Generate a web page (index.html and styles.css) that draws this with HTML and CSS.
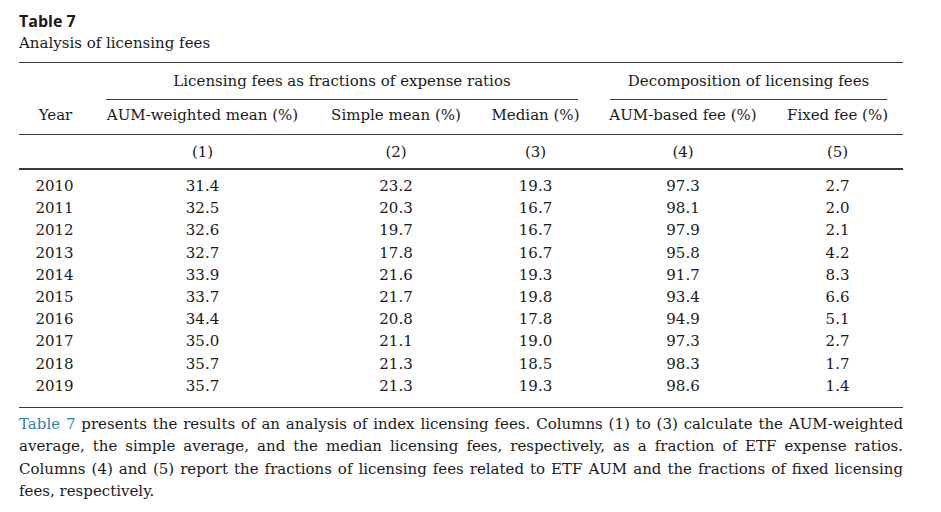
FILE: index.html
```html
<!DOCTYPE html>
<html lang="en">
<head>
<meta charset="utf-8">
<title>Table 7</title>
<link rel="stylesheet" href="styles.css">
</head>
<body>
<div class="page">
  <div class="label">Table 7</div>
  <div class="title">Analysis of licensing fees</div>
  <table class="tbl">
    <colgroup>
      <col class="c-year"><col class="c1"><col class="c2"><col class="c3"><col class="c4"><col class="c5">
    </colgroup>
    <thead>
      <tr class="r-group">
        <th></th>
        <th colspan="3"><div class="group">Licensing fees as fractions of expense ratios</div></th>
        <th colspan="2"><div class="group">Decomposition of licensing fees</div></th>
      </tr>
      <tr class="r-head">
        <th class="year">Year</th>
        <th>AUM-weighted mean (%)</th>
        <th>Simple mean (%)</th>
        <th>Median (%)</th>
        <th>AUM-based fee (%)</th>
        <th>Fixed fee (%)</th>
      </tr>
      <tr class="r-num">
        <th></th><th>(1)</th><th>(2)</th><th>(3)</th><th>(4)</th><th>(5)</th>
      </tr>
    </thead>
    <tbody>
      <tr><td>2010</td><td>31.4</td><td>23.2</td><td>19.3</td><td>97.3</td><td>2.7</td></tr>
      <tr><td>2011</td><td>32.5</td><td>20.3</td><td>16.7</td><td>98.1</td><td>2.0</td></tr>
      <tr><td>2012</td><td>32.6</td><td>19.7</td><td>16.7</td><td>97.9</td><td>2.1</td></tr>
      <tr><td>2013</td><td>32.7</td><td>17.8</td><td>16.7</td><td>95.8</td><td>4.2</td></tr>
      <tr><td>2014</td><td>33.9</td><td>21.6</td><td>19.3</td><td>91.7</td><td>8.3</td></tr>
      <tr><td>2015</td><td>33.7</td><td>21.7</td><td>19.8</td><td>93.4</td><td>6.6</td></tr>
      <tr><td>2016</td><td>34.4</td><td>20.8</td><td>17.8</td><td>94.9</td><td>5.1</td></tr>
      <tr><td>2017</td><td>35.0</td><td>21.1</td><td>19.0</td><td>97.3</td><td>2.7</td></tr>
      <tr><td>2018</td><td>35.7</td><td>21.3</td><td>18.5</td><td>98.3</td><td>1.7</td></tr>
      <tr><td>2019</td><td>35.7</td><td>21.3</td><td>19.3</td><td>98.6</td><td>1.4</td></tr>
    </tbody>
  </table>
  <p class="note">
    <span class="line"><a class="ref" href="#">Table 7</a> presents the results of an analysis of index licensing fees. Columns (1) to (3) calculate the AUM-weighted</span>
    <span class="line">average, the simple average, and the median licensing fees, respectively, as a fraction of ETF expense ratios.</span>
    <span class="line">Columns (4) and (5) report the fractions of licensing fees related to ETF AUM and the fractions of fixed licensing</span>
    <span class="line last">fees, respectively.</span>
  </p>
</div>
</body>
</html>
```
FILE: styles.css
```css
html, body {
  margin: 0;
  padding: 0;
  background: #fff;
}
.page {
  width: 884px;
  padding: 10px 0 0 19px;
  color: #1a1a1a;
  font-family: "DejaVu Serif", "Liberation Serif", serif;
  font-size: 15px;
  line-height: 22px;
}
.label {
  font-family: "Open Sans", "DejaVu Sans", sans-serif;
  font-weight: 700;
  font-size: 16px;
  line-height: 22px;
}
.title {
  line-height: 23px;
}
.tbl {
  margin-top: 7px;
  width: 884px;
  border-collapse: collapse;
  table-layout: fixed;
  border-top: 1.5px solid #3a3a3a;
  border-bottom: 1.5px solid #3a3a3a;
}
.c-year { width: 71px; }
.c1 { width: 225px; }
.c2 { width: 162px; }
.c3 { width: 117px; }
.c4 { width: 178px; }
.c5 { width: 131px; }
.tbl th, .tbl td {
  font-weight: 400;
  text-align: center;
  padding: 0;
  white-space: nowrap;
}
.r-group th {
  padding: 7px 16px 0 16px;
}
.group {
  border-bottom: 1px solid #3a3a3a;
  padding-bottom: 7px;
}
.r-head th {
  padding: 4px 0 8px;
  border-bottom: 1px solid #3a3a3a;
}
.r-head .year {
  padding-left: 2px;
}
.r-num th {
  padding: 6px 0 5px;
  border-bottom: 2px solid #3a3a3a;
}
.tbl td {
  line-height: 22.2px;
}
.tbl tbody tr:first-child td {
  padding-top: 5px;
}
.tbl tbody tr:last-child td {
  padding-bottom: 10px;
}
.note {
  margin: 5px 0 0;
  line-height: 22.3px;
}
.line {
  display: block;
  text-align: justify;
  text-align-last: justify;
  white-space: nowrap;
}
.line.last {
  text-align-last: left;
}
.ref {
  color: #2a86b0;
  text-decoration: none;
}
```
